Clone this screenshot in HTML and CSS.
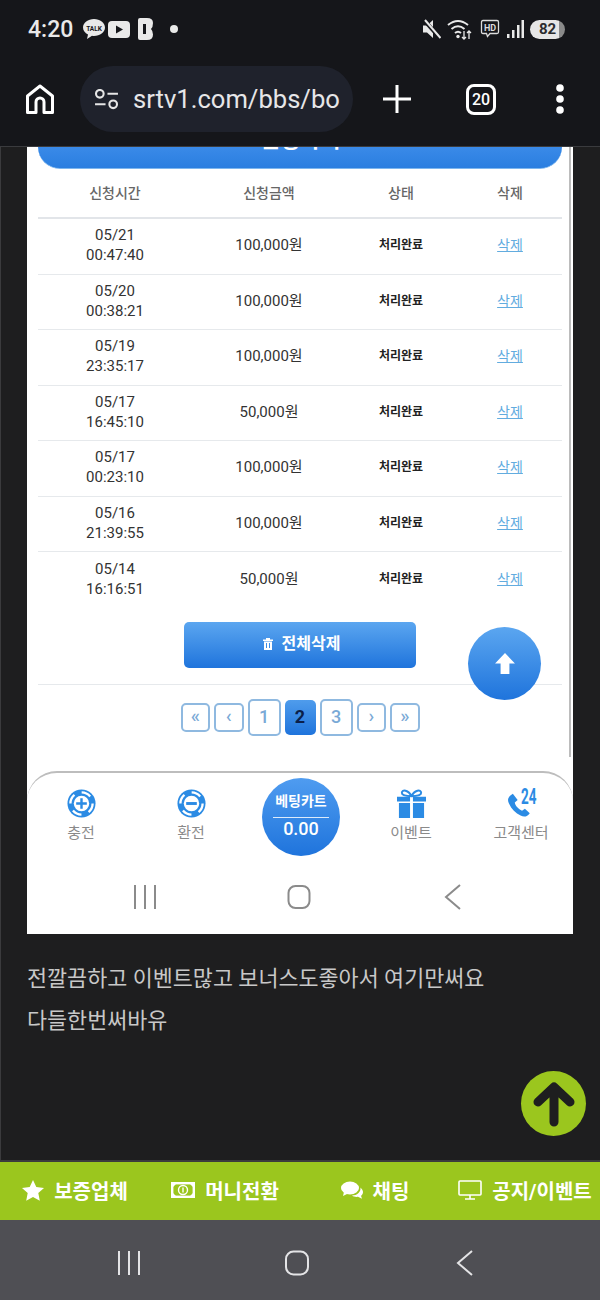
FILE: index.html
```html
<!DOCTYPE html>
<html lang="ko">
<head>
  <meta charset="UTF-8" />
  <meta name="viewport" content="width=device-width, initial-scale=1.0" />
  <title>srtv1.com</title>
  <link rel="stylesheet" href="styles.css">
</head>
<body>
  <!-- Phone status bar -->
  <div class="status-bar">
    <span class="clock">4:20</span>
    <svg class="ic-talk" viewBox="0 0 22 22"><path d="M11 1C5 1 0 4.700 0 9.500c0 3 2 5.500 5 7l-1 4.500 5-3.200c.7.100 1.300.200 2 .200 6 0 11-3.800 11-8.500S17 1 11 1z" fill="#e9e9e9"/><text x="11" y="12.500" text-anchor="middle" class="talk-text">TALK</text></svg>
    <svg class="ic-yt" viewBox="0 0 22 17"><rect width="22" height="17" rx="4" fill="#e9e9e9"/><path d="M8 4.500l7 4-7 4z" fill="#15161a"/></svg>
    <svg class="ic-b" viewBox="0 0 15 22"><path d="M0 2q0-2 2-2h7q6 0 6 5 0 4-2 6 2 2 2 5.500 0 5.500-6 5.500H2q-2 0-2-2z" fill="#e9e9e9"/><rect x="5" y="6" width="3" height="10" fill="#15161a"/></svg>
    <span class="status-dot"></span>
    <span class="status-space"></span>
    <svg class="ic-mute" viewBox="0 0 18 20"><path d="M0 6.500h4L10 1v18l-6-5.500H0z" fill="#e9e9e9"/><path d="M1 1l16 18" stroke="#15161a" stroke-width="4"/><path d="M2 1l15.500 18" stroke="#e9e9e9" stroke-width="2"/></svg>
    <svg class="ic-wifi" viewBox="0 0 26 22" fill="none" stroke="#e9e9e9" stroke-width="2"><path d="M1 7q10-8 20 0M4.500 11q6.500-5.500 13 0M8 15q3-2.500 6 0"/><circle cx="11" cy="18.500" r="1.700" fill="#e9e9e9" stroke="none"/><path d="M17 13v8M15 19l2 2 2-2M22 21v-8M20 15l2-2 2 2" stroke-width="1.300"/></svg>
    <svg class="ic-hd" viewBox="0 0 20 20"><path d="M3 1.500h14q1.500 0 1.500 1.500v10q0 1.500-1.500 1.500H10l-2.500 3-1-3H3q-1.500 0-1.500-1.500V3Q1.500 1.500 3 1.500z" fill="none" stroke="#dcdcdc" stroke-width="1.300"/><text x="10" y="11.500" text-anchor="middle" class="hd-text">HD</text></svg>
    <svg class="ic-signal" viewBox="0 0 17 20" fill="#e9e9e9"><rect x="0" y="15" width="2.500" height="4"/><rect x="5" y="11" width="2.500" height="8"/><rect x="10" y="6" width="2.500" height="13"/><rect x="14.500" y="1" width="2.500" height="18"/></svg>
    <span class="battery">82</span>
  </div>

  <!-- Browser toolbar -->
  <div class="toolbar">
    <svg class="ic-home" viewBox="0 0 28 30" fill="none" stroke="#fff" stroke-width="3" stroke-linejoin="round"><path d="M1.500 28.500V12L14 2l12.500 10v16.500H18V18a4 4 0 0 0-8 0v10.500z"/></svg>
    <div class="url-pill">
      <svg class="ic-tune" viewBox="0 0 26 22" fill="none" stroke="#e6e6e6" stroke-width="2.200"><circle cx="6" cy="5" r="4"/><path d="M14 5h11M1 16h11"/><circle cx="20" cy="16" r="4"/></svg>
      <span class="url-text">srtv1.com/bbs/bo</span>
    </div>
    <svg class="ic-plus" viewBox="0 0 28 28" stroke="#fff" stroke-width="3"><path d="M14 0v28M0 14h28"/></svg>
    <span class="tab-count">20</span>
    <svg class="ic-more" viewBox="0 0 8 30" fill="#fff"><circle cx="4" cy="4" r="3.800"/><circle cx="4" cy="15" r="3.800"/><circle cx="4" cy="26" r="3.800"/></svg>
  </div>

  <div class="post">
    <!-- Attached screenshot in the post -->
    <div class="shot">
      <div class="apply-btn"><span>신청하기</span></div>

      <div class="grid-row head-row">
        <div>신청시간</div><div>신청금액</div><div>상태</div><div>삭제</div>
      </div>
      <div class="grid-row">
        <div>05/21<br>00:47:40</div><div>100,000원</div><div class="done">처리완료</div><div><a class="del">삭제</a></div>
      </div>
      <div class="grid-row">
        <div>05/20<br>00:38:21</div><div>100,000원</div><div class="done">처리완료</div><div><a class="del">삭제</a></div>
      </div>
      <div class="grid-row">
        <div>05/19<br>23:35:17</div><div>100,000원</div><div class="done">처리완료</div><div><a class="del">삭제</a></div>
      </div>
      <div class="grid-row">
        <div>05/17<br>16:45:10</div><div>50,000원</div><div class="done">처리완료</div><div><a class="del">삭제</a></div>
      </div>
      <div class="grid-row">
        <div>05/17<br>00:23:10</div><div>100,000원</div><div class="done">처리완료</div><div><a class="del">삭제</a></div>
      </div>
      <div class="grid-row">
        <div>05/16<br>21:39:55</div><div>100,000원</div><div class="done">처리완료</div><div><a class="del">삭제</a></div>
      </div>
      <div class="grid-row last-row">
        <div>05/14<br>16:16:51</div><div>50,000원</div><div class="done">처리완료</div><div><a class="del">삭제</a></div>
      </div>

      <div class="delete-all">
        <svg class="ic-trash" viewBox="0 0 10 12" fill="#fff"><path d="M0 1.500h3V0h4v1.500h3V3H0zM1 3.500h8V12H1zM3 5v5h1V5zM6 5v5h1V5z" fill-rule="evenodd"/></svg>
        전체삭제
      </div>
      <div class="divider"></div>

      <div class="pager">
        <span class="pg">«</span>
        <span class="pg">‹</span>
        <span class="pg num">1</span>
        <span class="pg num active">2</span>
        <span class="pg num">3</span>
        <span class="pg">›</span>
        <span class="pg">»</span>
      </div>

      <div class="app-nav">
        <div class="app-item">
          <svg class="ic-chip" viewBox="0 0 30 30"><circle cx="15" cy="15" r="14.500" fill="#2b8be4"/><circle cx="15" cy="15" r="11.500" fill="none" stroke="#fff" stroke-width="2.400" stroke-dasharray="10 8"/><circle cx="15" cy="15" r="8" fill="#fff"/><path d="M15 9.500v11M9.500 15h11" stroke="#2b8be4" stroke-width="2.500"/></svg>
          <span>충전</span>
        </div>
        <div class="app-item">
          <svg class="ic-chip" viewBox="0 0 30 30"><circle cx="15" cy="15" r="14.500" fill="#2b8be4"/><circle cx="15" cy="15" r="11.500" fill="none" stroke="#fff" stroke-width="2.400" stroke-dasharray="10 8"/><circle cx="15" cy="15" r="8" fill="#fff"/><path d="M9.500 15h11" stroke="#2b8be4" stroke-width="3"/></svg>
          <span>환전</span>
        </div>
        <div class="app-item">
          <div class="bet-cart">
            <span class="bet-title">베팅카트</span>
            <span class="bet-value">0.00</span>
          </div>
        </div>
        <div class="app-item">
          <svg class="ic-gift" viewBox="0 0 30 30" fill="#2b8be4"><path d="M0 8h13.500v5H0zM16.500 8H30v5H16.500zM2 14.500h11.500V30H2zM16.500 14.500H28V30H16.500z"/><path d="M15 7.500C12 1 5 0 5 4c0 3 5 3.500 10 3.500zM15 7.500C18 1 25 0 25 4c0 3-5 3.500-10 3.500z" fill="none" stroke="#2b8be4" stroke-width="2"/></svg>
          <span>이벤트</span>
        </div>
        <div class="app-item">
          <svg class="ic-call" viewBox="0 0 32 30"><path d="M6 5C1 8 0 11 2 15c2.500 6 7 10 12 12.500 4 2 7 1 9.500-2.500l-5-4.500-3 2C12 21 8.500 17.500 8 14l3-2.500z" fill="#2b8be4"/><text x="14.500" y="16" textLength="16" lengthAdjust="spacingAndGlyphs" class="call-text">24</text></svg>
          <span>고객센터</span>
        </div>
      </div>

      <div class="soft-keys shot-keys">
        <svg viewBox="0 0 24 26" fill="none" stroke="#8b8b8b" stroke-width="2"><path d="M2 1v24M12 1v24M22 1v24"/></svg>
        <svg viewBox="0 0 24 26" fill="none" stroke="#8b8b8b" stroke-width="2"><rect x="1.500" y="2" width="21" height="22" rx="7"/></svg>
        <svg viewBox="0 0 24 26" fill="none" stroke="#8b8b8b" stroke-width="2"><path d="M19 1L5 13l14 12"/></svg>
      </div>

      <!-- Overlays on the screenshot -->
      <div class="top-circle">
        <svg viewBox="1 1 18 19" fill="#fff"><path d="M10 1l9 9.500h-5V20H6v-9.500H1z"/></svg>
      </div>
      <div class="shot-scroll"></div>
    </div>

    <p class="post-text">전깔끔하고 이벤트많고 보너스도좋아서 여기만써요<br>다들한번써바유</p>

    <div class="go-top">
      <svg viewBox="0 0 44 46" fill="none" stroke="#1e1e1f" stroke-width="9" stroke-linecap="round" stroke-linejoin="round"><path d="M22 41V7M6 21L22 6l16 15"/></svg>
    </div>
  </div>

  <!-- Site bottom bar -->
  <div class="site-bar">
    <div class="site-item">
      <svg class="ic-star" viewBox="0 0 22 21" fill="#fff"><path d="M11 0l3.300 7 7.700.9-5.700 5.200 1.500 7.600L11 17l-6.800 3.700 1.500-7.600L0 7.900 7.700 7z"/></svg>
      보증업체
    </div>
    <div class="site-item">
      <svg class="ic-cash" viewBox="0 0 24 16" fill="none" stroke="#fff"><rect x="1.200" y="1.200" width="21.600" height="13.600" stroke-width="2.400"/><path d="M2 2h3L2 5zM22 2h-3l3 3zM2 14h3l-3-3zM22 14h-3l3-3z" fill="#fff" stroke="none"/><circle cx="12" cy="8" r="4.500" stroke-width="1.400"/><path d="M12 5.500v5" stroke-width="1.400"/></svg>
      머니전환
    </div>
    <div class="site-item">
      <svg class="ic-chat" viewBox="0 0 22 18" fill="#fff"><ellipse cx="9" cy="7" rx="9" ry="6.500"/><path d="M3 11l-1 4 5-2.500z"/><path d="M19.500 6.500C21 8 22 9.500 22 11c0 2-1 3-2 3.800l1 3-4-2c-2 .3-4.500 0-6-1.300 5 0 9-3.500 8.500-8z"/></svg>
      채팅
    </div>
    <div class="site-item">
      <svg class="ic-monitor" viewBox="0 0 24 20" fill="none" stroke="#fff" stroke-width="1.600"><rect x="1" y="1" width="22" height="14" rx="1"/><path d="M12 15v4M7 19h10"/></svg>
      공지/이벤트
    </div>
  </div>

  <div class="soft-keys phone-keys">
    <svg viewBox="0 0 24 26" fill="none" stroke="#e4e4e6" stroke-width="2"><path d="M2 1v24M12 1v24M22 1v24"/></svg>
    <svg viewBox="0 0 24 26" fill="none" stroke="#e4e4e6" stroke-width="2"><rect x="1" y="1.500" width="22" height="23" rx="7.500"/></svg>
    <svg viewBox="0 0 24 26" fill="none" stroke="#e4e4e6" stroke-width="2"><path d="M19 1L5 13l14 12"/></svg>
  </div>
</body>
</html>
```

FILE: styles.css
```css
* {
  box-sizing: border-box;
}
body {
  margin: 0;
  width: 600px;
  height: 1300px;
  overflow: hidden;
  display: flex;
  flex-direction: column;
  background: #1e1e1f;
  font-family: Roboto, "Noto Sans CJK KR", sans-serif;
}
svg {
  display: block;
  flex: none;
}

/* Status bar */
.status-bar {
  height: 58px;
  padding: 0 35px 0 28px;
  display: flex;
  align-items: center;
  background: #15161a;
  color: #e9e9e9;
}
.clock {
  font-size: 23px;
  font-weight: 500;
  margin-right: 10px;
}
.ic-talk { width: 22px; height: 22px; margin-right: 3px; }
.talk-text { font-size: 6.500px; font-weight: 700; fill: #15161a; font-family: Roboto, sans-serif; }
.ic-yt { width: 22px; height: 17px; margin-right: 8px; }
.ic-b { width: 15px; height: 22px; margin-right: 17px; }
.status-dot { width: 8px; height: 8px; border-radius: 50%; background: #e9e9e9; }
.status-space { flex: 1; }
.ic-mute { width: 18px; height: 20px; margin-right: 6px; }
.ic-wifi { width: 26px; height: 22px; margin-right: 7px; }
.ic-hd { width: 20px; height: 20px; margin-right: 7px; }
.hd-text { font-size: 9px; font-weight: 700; fill: #dcdcdc; font-family: Roboto, sans-serif; }
.ic-signal { width: 17px; height: 20px; margin-right: 6px; }
.battery {
  width: 35px;
  height: 19px;
  border-radius: 10px;
  background: linear-gradient(90deg, #e6e6e6 82%, #8a8a8a 82%);
  color: #2c2c2e;
  font-size: 15px;
  font-weight: 700;
  line-height: 19px;
  text-align: center;
}

/* Browser toolbar */
.toolbar {
  height: 89px;
  padding: 0 0 6px 26px;
  display: flex;
  align-items: center;
  background: #15161a;
  border-bottom: 1px solid #3a3b3e;
}
.ic-home { width: 28px; height: 30px; margin-right: 26px; }
.url-pill {
  width: 273px;
  height: 66px;
  border-radius: 33px;
  background: #1f222c;
  padding: 0 13px 0 14px;
  display: flex;
  align-items: center;
  gap: 14px;
  margin-right: 30px;
}
.ic-tune { width: 25px; height: 21px; }
.url-text {
  font-size: 25.600px;
  color: #e6e6e8;
  white-space: nowrap;
  overflow: hidden;
}
.ic-plus { width: 28px; height: 28px; margin-right: 55px; }
.tab-count {
  width: 30px;
  height: 31px;
  border: 3px solid #fff;
  border-radius: 8px;
  color: #fff;
  font-size: 16px;
  font-weight: 500;
  line-height: 25px;
  text-align: center;
  margin-right: 60px;
}
.ic-more { width: 8px; height: 30px; }

/* Post area */
.post {
  position: relative;
  flex: 1;
  padding: 0 27px;
  border-left: 1px solid #3b3b3d;
  border-bottom: 2px solid #3b3b3d;
}
.shot {
  position: relative;
  width: 546px;
  height: 787px;
  margin-left: -1px;
  background: #fff;
  overflow: hidden;
}
.apply-btn {
  height: 22px;
  margin: 0 11px;
  border-radius: 0 0 24px 24px;
  background: linear-gradient(#3a8ae8, #2a7ee0);
  border-bottom: 1px solid #7db6ee;
  overflow: hidden;
  text-align: center;
  color: #fff;
  font-size: 22px;
  font-weight: 700;
  line-height: 22px;
}
.apply-btn span {
  display: block;
  margin-top: -18px;
}

/* Request table */
.grid-row {
  display: grid;
  grid-template-columns: 154px 154px 110px 108px;
  align-items: center;
  height: 55.500px;
  margin: 0 11px;
  padding-bottom: 2px;
  border-bottom: 1px solid #e6e9ec;
  color: #333;
  font-size: 15px;
  line-height: 20px;
  text-align: center;
}
.last-row {
  border-bottom: none;
}
.head-row {
  height: 50px;
  padding-bottom: 0;
  border-bottom: 2px solid #e2e5e9;
  color: #666;
  font-size: 14px;
  font-weight: 500;
}
.done {
  color: #222;
  font-size: 12px;
  font-weight: 700;
}
.del {
  color: #62acdf;
  font-size: 14px;
  text-decoration: underline;
}

.delete-all {
  width: 232px;
  height: 46px;
  margin: 14.500px 0 0 157px;
  border-radius: 5px;
  background: linear-gradient(#5ba6f0, #1f74dc);
  color: #fff;
  font-size: 16px;
  font-weight: 700;
  display: flex;
  align-items: center;
  justify-content: center;
  gap: 9px;
  padding: 0 0 6px 3px;
}
.ic-trash { width: 10px; height: 12px; margin-top: 3px; }
.divider {
  height: 1px;
  margin: 16px 11px 0;
  background: #e6e9ec;
}

/* Pagination */
.pager {
  height: 37px;
  margin-top: 14px;
  display: flex;
  align-items: center;
  justify-content: center;
  gap: 4px;
}
.pg {
  width: 29.500px;
  height: 29px;
  border: 2px solid #8fb9e0;
  border-radius: 5px;
  color: #7aa9d6;
  font-size: 19px;
  font-weight: 500;
  line-height: 22px;
  text-align: center;
}
.pg.num {
  width: 33px;
  height: 37px;
  font-size: 18px;
  line-height: 31px;
}
.pg.active {
  width: 31px;
  height: 35px;
  border: none;
  background: linear-gradient(#4f9cec, #1f74dc);
  color: #0b1f4a;
  font-weight: 700;
  line-height: 33px;
}

/* App bottom nav inside the screenshot */
.app-nav {
  height: 106px;
  margin-top: 35px;
  border-top: 2px solid #bdbdbd;
  border-radius: 30px 30px 0 0;
  display: grid;
  grid-template-columns: repeat(5, 110px);
  justify-content: center;
  padding-left: 2px;
}
.app-item {
  display: flex;
  flex-direction: column;
  align-items: center;
  padding-top: 16px;
  gap: 5px;
  color: #8a8a8a;
  font-size: 15px;
  line-height: 20px;
}
.ic-chip { width: 29px; height: 29px; }
.ic-gift { width: 29px; height: 29px; }
.ic-call { width: 31px; height: 29px; margin-left: 3px; overflow: visible; }
.call-text {
  font-size: 22px;
  font-weight: 700;
  fill: #2b8be4;
  font-family: Roboto, sans-serif;
}
.bet-cart {
  width: 78px;
  height: 78px;
  margin-top: -11px;
  border-radius: 50%;
  background: linear-gradient(#4f9cf0, #1f74dc);
  color: #fff;
  display: flex;
  flex-direction: column;
  align-items: center;
  padding-top: 13px;
}
.bet-title {
  font-size: 14px;
  font-weight: 700;
  line-height: 20px;
  padding: 0 0 6px;
  border-bottom: 1px solid #dcebfb;
  width: 56px;
  text-align: center;
  white-space: nowrap;
}
.bet-value {
  font-size: 18px;
  font-weight: 500;
  line-height: 22px;
}

/* Android soft keys */
.soft-keys {
  display: grid;
  justify-content: center;
  justify-items: center;
}
.soft-keys svg {
  width: 24px;
  height: 26px;
}
.shot-keys {
  grid-template-columns: repeat(3, 154px);
  padding-right: 2px;
  padding-top: 7px;
}
.phone-keys {
  height: 80px;
  grid-template-columns: repeat(3, 168px);
  align-items: center;
  background: #4f4f54;
  padding: 6px 6px 0 0;
}

/* Overlays */
.top-circle {
  position: absolute;
  left: 441px;
  top: 480px;
  width: 73px;
  height: 73px;
  border-radius: 50%;
  background: linear-gradient(#5ba6f0, #1f74dc);
  display: flex;
  align-items: center;
  justify-content: center;
}
.top-circle svg { width: 20px; height: 21px; }
.shot-scroll {
  position: absolute;
  right: 2px;
  top: 0;
  width: 2px;
  height: 610px;
  background: #bcbcbc;
}

/* Post text */
.post-text {
  margin: 24px 0 0 -1px;
  color: #c8c8c8;
  font-size: 21.800px;
  line-height: 42px;
}
.go-top {
  position: absolute;
  left: 520px;
  top: 924px;
  width: 65px;
  height: 65px;
  border-radius: 50%;
  background: #9bc61e;
  display: flex;
  align-items: center;
  justify-content: center;
}
.go-top svg { width: 44px; height: 46px; }

/* Site bottom bar */
.site-bar {
  height: 58px;
  display: grid;
  grid-template-columns: repeat(4, 150px);
  background: #9bc61e;
  color: #fff;
  font-size: 20px;
  font-weight: 700;
}
.site-item {
  display: flex;
  align-items: center;
  justify-content: center;
  gap: 10px;
  padding-bottom: 2px;
  white-space: nowrap;
}
.ic-star { width: 22px; height: 21px; }
.ic-cash { width: 24px; height: 16px; }
.ic-chat { width: 22px; height: 18px; }
.ic-monitor { width: 24px; height: 20px; }
```
